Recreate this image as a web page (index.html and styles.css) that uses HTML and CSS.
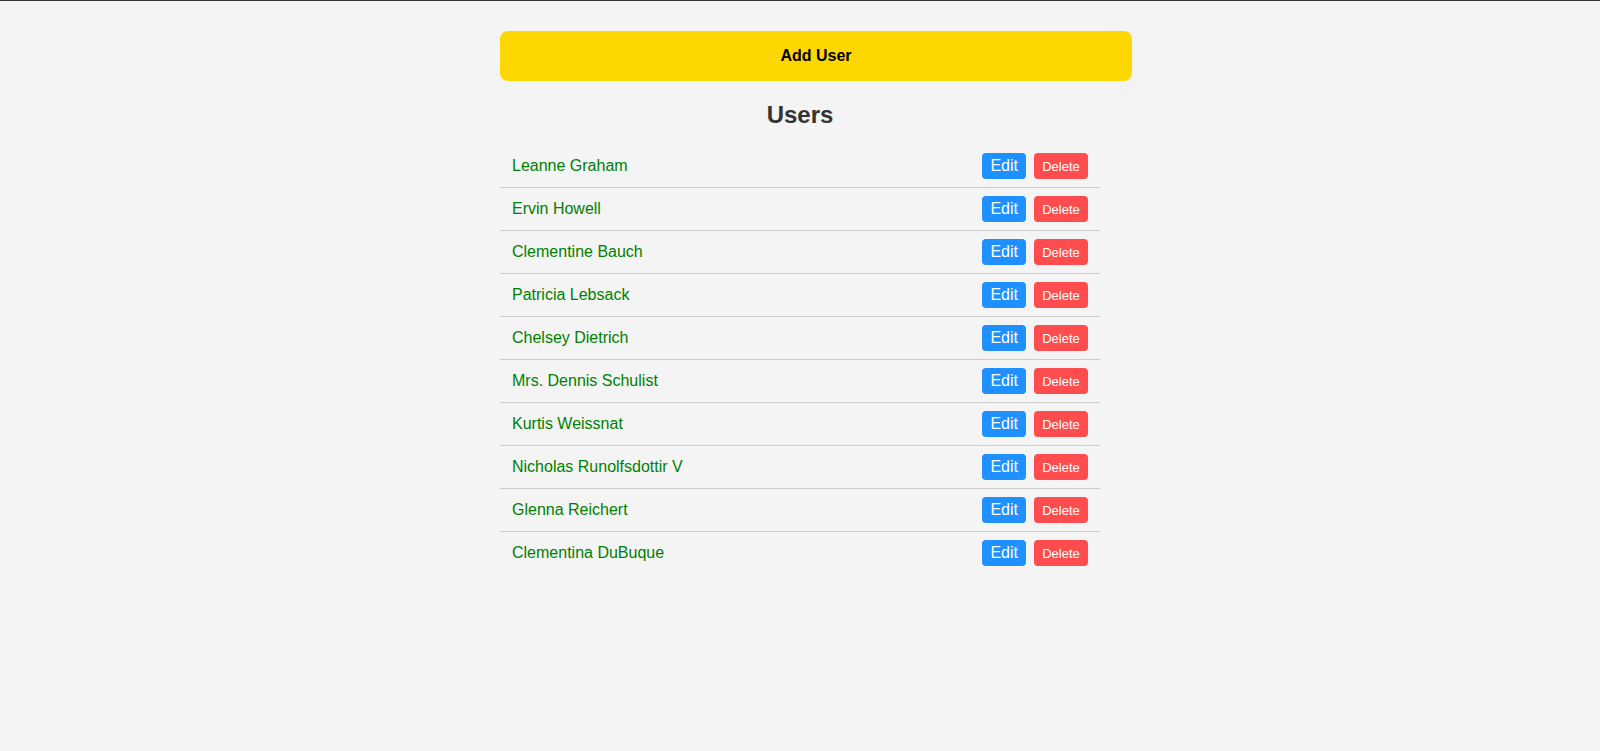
FILE: index.html
```html
<!DOCTYPE html>
<html lang="en">
<head>
<meta charset="utf-8">
<title>Users</title>
<link rel="stylesheet" href="styles.css">
</head>
<body>
<div class="topbar"></div>
<main class="container">
  <button class="add-btn">Add User</button>
  <h2 class="title">Users</h2>
  <ul class="user-list">
    <li class="user-row"><span class="user-name">Leanne Graham</span><div class="actions"><button class="edit-btn">Edit</button><button class="delete-btn">Delete</button></div></li>
    <li class="user-row"><span class="user-name">Ervin Howell</span><div class="actions"><button class="edit-btn">Edit</button><button class="delete-btn">Delete</button></div></li>
    <li class="user-row"><span class="user-name">Clementine Bauch</span><div class="actions"><button class="edit-btn">Edit</button><button class="delete-btn">Delete</button></div></li>
    <li class="user-row"><span class="user-name">Patricia Lebsack</span><div class="actions"><button class="edit-btn">Edit</button><button class="delete-btn">Delete</button></div></li>
    <li class="user-row"><span class="user-name">Chelsey Dietrich</span><div class="actions"><button class="edit-btn">Edit</button><button class="delete-btn">Delete</button></div></li>
    <li class="user-row"><span class="user-name">Mrs. Dennis Schulist</span><div class="actions"><button class="edit-btn">Edit</button><button class="delete-btn">Delete</button></div></li>
    <li class="user-row"><span class="user-name">Kurtis Weissnat</span><div class="actions"><button class="edit-btn">Edit</button><button class="delete-btn">Delete</button></div></li>
    <li class="user-row"><span class="user-name">Nicholas Runolfsdottir V</span><div class="actions"><button class="edit-btn">Edit</button><button class="delete-btn">Delete</button></div></li>
    <li class="user-row"><span class="user-name">Glenna Reichert</span><div class="actions"><button class="edit-btn">Edit</button><button class="delete-btn">Delete</button></div></li>
    <li class="user-row"><span class="user-name">Clementina DuBuque</span><div class="actions"><button class="edit-btn">Edit</button><button class="delete-btn">Delete</button></div></li>
  </ul>
</main>
</body>
</html>
```
FILE: styles.css
```css
html, body {
  margin: 0;
  padding: 0;
  background: #f3f3f3;
  font-family: "Liberation Sans", Arial, sans-serif;
}

.topbar {
  height: 1px;
  background: #36373b;
}

.container {
  width: 600px;
  margin: 20px auto 0;
  padding: 10px 10px 22px;
  background: #f4f4f4;
  border-radius: 8px;
}

.add-btn {
  display: block;
  box-sizing: content-box;
  width: 100%;
  padding: 16px;
  border: none;
  border-radius: 8px;
  background: #ffd700;
  color: #000;
  font-family: "Liberation Sans", Arial, sans-serif;
  font-size: 16px;
  font-weight: bold;
  line-height: 18px;
  cursor: pointer;
}

.title {
  margin: 20px 0 16px;
  text-align: center;
  font-size: 24px;
  line-height: 28px;
  font-weight: bold;
  color: #333;
}

.user-list {
  list-style: none;
  margin: 0;
  padding: 0;
}

.user-row {
  display: flex;
  align-items: center;
  justify-content: space-between;
  padding: 8px 12px;
  border-bottom: 1px solid #cccccc;
}

.user-row:last-child {
  border-bottom: none;
}

.user-name {
  color: #008000;
  font-size: 16px;
  line-height: 18px;
}

.actions {
  display: flex;
  align-items: center;
  gap: 8px;
}

.edit-btn {
  height: 26px;
  padding: 0 8px;
  border: none;
  border-radius: 4px;
  background: #1e90ff;
  color: #fff;
  font-family: "Liberation Sans", Arial, sans-serif;
  font-size: 16px;
  line-height: 18px;
}

.delete-btn {
  height: 26px;
  width: 54px;
  padding: 0;
  border: none;
  border-radius: 4px;
  background: #ff4d4f;
  color: #fff;
  font-family: "Liberation Sans", Arial, sans-serif;
  font-size: 13px;
  line-height: 15px;
}
```
